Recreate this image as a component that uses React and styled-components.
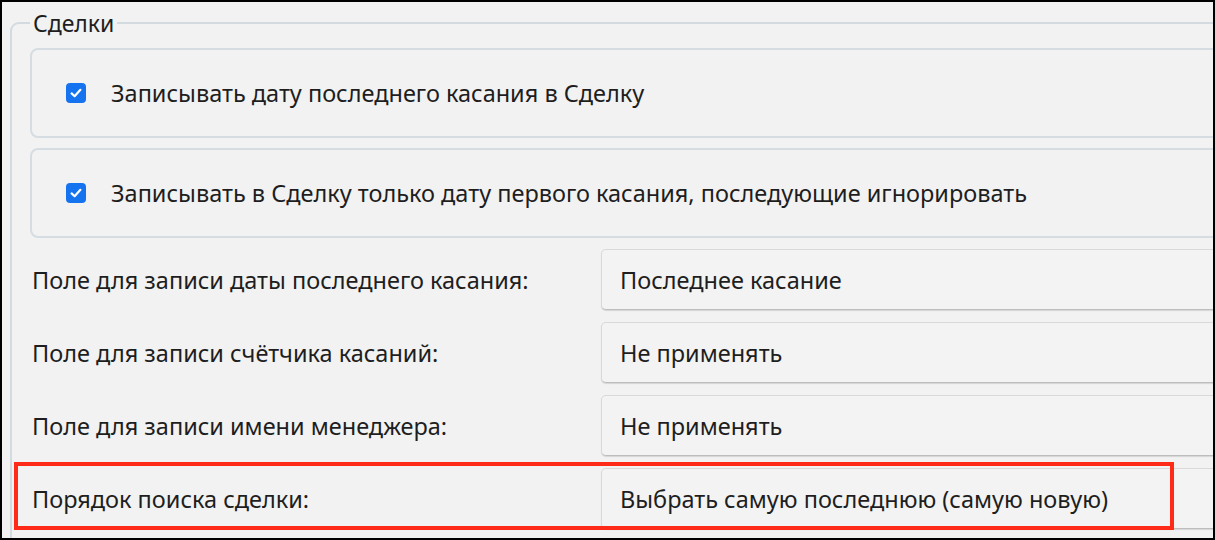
import styled, { createGlobalStyle } from 'styled-components';

const GlobalStyle = createGlobalStyle`
  html, body {
    margin: 0;
    padding: 0;
    background: #f2f2f2;
  }
  * {
    box-sizing: border-box;
  }
`;

const Frame = styled.div`
  width: 1215px;
  height: 540px;
  border: 2px solid #000;
  background: #f2f2f2;
  overflow: hidden;
  font-family: "Noto Sans", "Open Sans", sans-serif;
  font-size: 23.5px;
  color: #1e1e1e;
`;

const Group = styled.fieldset`
  margin: 8px 0 0 8px;
  width: 1260px;
  padding: 12px 0 0 18px;
  border: 2px solid #d3dbe1;
  border-radius: 9px;
  display: flex;
  flex-direction: column;
  min-height: 560px;
`;

const Legend = styled.legend`
  padding: 0 3px;
  margin-left: 0;
  font-size: 23px;
  line-height: 26px;
  color: #1e1e1e;
`;

const OptionBox = styled.label`
  display: flex;
  align-items: center;
  gap: 25px;
  height: 90px;
  margin-bottom: ${({ $gap }) => $gap}px;
  padding-left: 34px;
  border: 2px solid #d6dde2;
  border-radius: 8px;
`;

const Check = styled.span`
  width: 20px;
  height: 20px;
  border-radius: 4px;
  background: #1573f0;
  display: flex;
  align-items: center;
  justify-content: center;
  flex-shrink: 0;
`;

const Row = styled.div`
  position: relative;
  display: grid;
  grid-template-columns: 571px 1fr;
  align-items: center;
  height: 61px;
  margin-bottom: 12px;
`;

const Label = styled.span`
  padding-left: 2px;
`;

const Select = styled.div`
  height: 100%;
  display: flex;
  align-items: center;
  padding-left: 18px;
  background: #f3f3f3;
  border: 1px solid #d9d9d9;
  border-bottom-color: #bdbdbd;
  border-radius: 5px;
  box-shadow: 0 1px 1px rgba(0, 0, 0, 0.12);
`;

const Highlight = styled.div`
  position: absolute;
  left: -16px;
  top: -6px;
  width: 1160px;
  height: 68px;
  border: 4px solid #ff2a17;
  pointer-events: none;
`;

const CheckMark = () => (
  <svg width="14" height="14" viewBox="0 0 14 14">
    <path
      d="M2.6 7.4 L5.6 10.2 L11.4 3.8"
      fill="none"
      stroke="#fff"
      strokeWidth="2.2"
      strokeLinecap="round"
      strokeLinejoin="round"
    />
  </svg>
);

const options = [
  { text: 'Записывать дату последнего касания в Сделку', gap: 10 },
  { text: 'Записывать в Сделку только дату первого касания, последующие игнорировать', gap: 11 },
];

const rows = [
  { label: 'Поле для записи даты последнего касания:', value: 'Последнее касание' },
  { label: 'Поле для записи счётчика касаний:', value: 'Не применять' },
  { label: 'Поле для записи имени менеджера:', value: 'Не применять' },
  { label: 'Порядок поиска сделки:', value: 'Выбрать самую последнюю (самую новую)', marked: true },
];

export default function App() {
  return (
    <>
      <GlobalStyle />
      <Frame>
        <Group>
          <Legend>Сделки</Legend>
          {options.map((o) => (
            <OptionBox key={o.text} $gap={o.gap}>
              <Check>
                <CheckMark />
              </Check>
              {o.text}
            </OptionBox>
          ))}
          {rows.map((r) => (
            <Row key={r.label}>
              <Label>{r.label}</Label>
              <Select>{r.value}</Select>
              {r.marked && <Highlight />}
            </Row>
          ))}
        </Group>
      </Frame>
    </>
  );
}
